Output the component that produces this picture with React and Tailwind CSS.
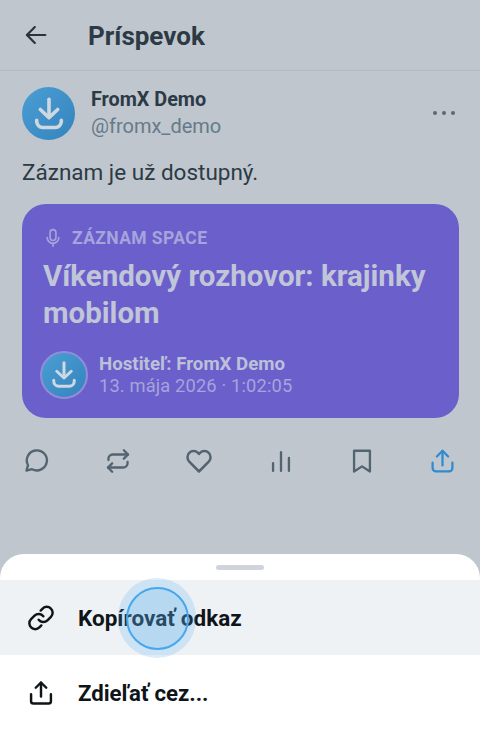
import React from "react";

const Logo = ({ size, stroke }) => (
  <svg width={size} height={size} viewBox="0 0 24 24" fill="none" stroke={stroke} strokeWidth="2.4" strokeLinecap="round" strokeLinejoin="round">
    <path d="M12 2.2v11.6" />
    <path d="M6.2 9 12 14.4 17.8 9" />
    <path d="M3.8 16.2v.8a4 4 0 0 0 4 4h8.4a4 4 0 0 0 4-4v-.8" />
  </svg>
);

const Ic = ({ children, color = "#536471", size = 28, sw = 2 }) => (
  <svg width={size} height={size} viewBox="0 0 24 24" fill="none" stroke={color} strokeWidth={sw} strokeLinecap="round" strokeLinejoin="round">
    {children}
  </svg>
);

export default function App() {
  return (
    <div className="relative w-[480px] h-[755px] overflow-hidden bg-[#bfc6ce] font-['Roboto',sans-serif]">
      <header className="h-[71px] border-b border-[#b3bbc4] flex items-center pl-[22px]">
        <svg width="28" height="28" viewBox="0 0 24 24" fill="none" stroke="#2a343c" strokeWidth="1.9" strokeLinecap="round" strokeLinejoin="round">
          <path d="M20 12H4.5" />
          <path d="M11 5.2 4.2 12l6.8 6.8" />
        </svg>
        <h1 className="ml-[38px] pt-[2px] text-[26px] font-bold text-[#2c3a45] leading-none">Príspevok</h1>
      </header>

      <section className="px-[22px] pt-4">
        <div className="flex items-center">
          <div className="w-[53px] h-[53px] rounded-full bg-gradient-to-br from-[#4a9fd4] to-[#3583bd] flex items-center justify-center">
            <Logo size={36} stroke="#cfd8e0" />
          </div>
          <div className="ml-4 flex flex-col">
            <span className="text-[19.8px] leading-[26px] font-bold text-[#2c3a45]">FromX Demo</span>
            <span className="text-[20px] leading-[27px] text-[#667a89]">@fromx_demo</span>
          </div>
          <div className="ml-auto mr-[3px] flex gap-[5px] -mt-px">
            <span className="w-[4px] h-[4px] rounded-full bg-[#5b6874]" />
            <span className="w-[4px] h-[4px] rounded-full bg-[#5b6874]" />
            <span className="w-[4px] h-[4px] rounded-full bg-[#5b6874]" />
          </div>
        </div>

        <p className="mt-[18px] text-[22.5px] leading-[28px] text-[#2c3a45]">Záznam je už dostupný.</p>

        <div className="mt-[18px] w-[437px] h-[214px] rounded-[24px] bg-[#6b5fcb] px-[21px] pt-[21px]">
          <div className="flex items-center h-[26px]">
            <svg width="20" height="20" viewBox="0 0 24 24" fill="none" stroke="#a5a4dc" strokeWidth="2" strokeLinecap="round" strokeLinejoin="round">
              <rect x="8.5" y="2" width="7" height="13" rx="3.5" />
              <path d="M5 11.5a7 7 0 0 0 14 0" />
              <path d="M12 18.5V22" />
            </svg>
            <span className="ml-[9px] text-[17.5px] font-bold tracking-[0.4px] text-[#a5a4dc]">ZÁZNAM SPACE</span>
          </div>
          <h2 className="mt-[7px] text-[29.5px] leading-[37px] font-bold text-[#c0c5d8]">Víkendový rozhovor: krajinky mobilom</h2>
          <div className="mt-[19px] flex items-center -ml-[3px]">
            <div className="w-[48px] h-[48px] rounded-full border-[2px] border-[#8f8ed6] bg-gradient-to-br from-[#4a9fd4] to-[#3583bd] flex items-center justify-center">
              <Logo size={30} stroke="#cfd8e0" />
            </div>
            <div className="ml-[11px] flex flex-col">
              <span className="text-[18.7px] leading-[21px] font-bold text-[#bcc1d8]">Hostiteľ: FromX Demo</span>
              <span className="text-[18.3px] leading-[21px] tracking-[0.15px] text-[#a5a4dc]">13. mája 2026 · 1:02:05</span>
            </div>
          </div>
        </div>

        <div className="mt-[29px] flex items-center justify-between -mx-[1px]">
          <span className="w-[30px] h-[28px] flex items-center justify-center">
            <Ic>
              <path d="M3.8 20.2 5.2 15.6A8.6 8.6 0 1 1 8.6 19Z" />
            </Ic>
          </span>
          <span className="w-[30px] h-[28px] flex items-center justify-center">
            <Ic>
              <path d="m17 2.8 3.6 3.6L17 10" />
              <path d="M3.8 11.2v-1a3.7 3.7 0 0 1 3.7-3.8h13" />
              <path d="m7 21.2-3.6-3.6L7 14" />
              <path d="M20.2 12.8v1a3.7 3.7 0 0 1-3.7 3.8h-13" />
            </Ic>
          </span>
          <span className="w-[30px] h-[28px] flex items-center justify-center">
            <Ic size={30}>
              <path d="M12 20.4 4.2 12.5a5 5 0 0 1 0-7 4.9 4.9 0 0 1 7 0l.8.9.8-.9a4.9 4.9 0 0 1 7 0 5 5 0 0 1 0 7Z" />
            </Ic>
          </span>
          <span className="w-[30px] h-[28px] flex items-center justify-center">
            <Ic>
              <path d="M5.2 20.4v-6.6M12 20.4V4.4M18.8 20.4V9.4" />
            </Ic>
          </span>
          <span className="w-[30px] h-[28px] flex items-center justify-center">
            <Ic>
              <path d="M5.2 21V3.2h13.6V21L12 16.6Z" />
            </Ic>
          </span>
          <span className="w-[30px] h-[28px] flex items-center justify-center -translate-x-px">
            <Ic color="#2f8bd0" size={27}>
              <path d="M12 15.5V2.8" />
              <path d="m7 7.5 5-5 5 5" />
              <path d="M3.2 13v4.8a3 3 0 0 0 3 3h11.6a3 3 0 0 0 3-3V13" />
            </Ic>
          </span>
        </div>
      </section>

      <div className="absolute left-0 top-[554px] w-[480px] h-[201px] bg-white rounded-t-[24px]">
        <div className="h-[26px] flex justify-center pt-[11px]">
          <div className="w-[48px] h-[5px] rounded-full bg-[#ced4da]" />
        </div>
        <div className="h-[75px] bg-[#eff2f4] flex items-center px-[27px]">
          <Ic color="#0f1419" sw={2.1}>
            <path d="M10 13.5a5 5 0 0 0 7.5.5l3-3a5 5 0 0 0-7.1-7.1l-1.7 1.7" />
            <path d="M14 10.5a5 5 0 0 0-7.5-.5l-3 3a5 5 0 0 0 7.1 7.1l1.7-1.7" />
          </Ic>
          <span className="ml-[23px] pt-[3px] text-[22.5px] font-bold text-[#0f1419]">Kopírovať odkaz</span>
        </div>
        <div className="h-[75px] flex items-center px-[27px]">
          <Ic color="#0f1419" sw={2.1}>
            <path d="M12 15V3.2" />
            <path d="m7.5 7.5 4.5-4.5 4.5 4.5" />
            <path d="M3.5 13v6a2 2 0 0 0 2 2h13a2 2 0 0 0 2-2v-6" />
          </Ic>
          <span className="ml-[23px] pt-[3px] text-[22.2px] font-bold text-[#0f1419]">Zdieľať cez...</span>
        </div>
      </div>

      <div className="absolute left-[118px] top-[578px] w-[78px] h-[80px] rounded-full bg-[#45a5ea]/20 flex items-center justify-center">
        <div className="w-[63px] h-[63px] rounded-full border-[2px] border-[#45a8ee] bg-[#5fb2ee]/20" />
      </div>
    </div>
  );
}
